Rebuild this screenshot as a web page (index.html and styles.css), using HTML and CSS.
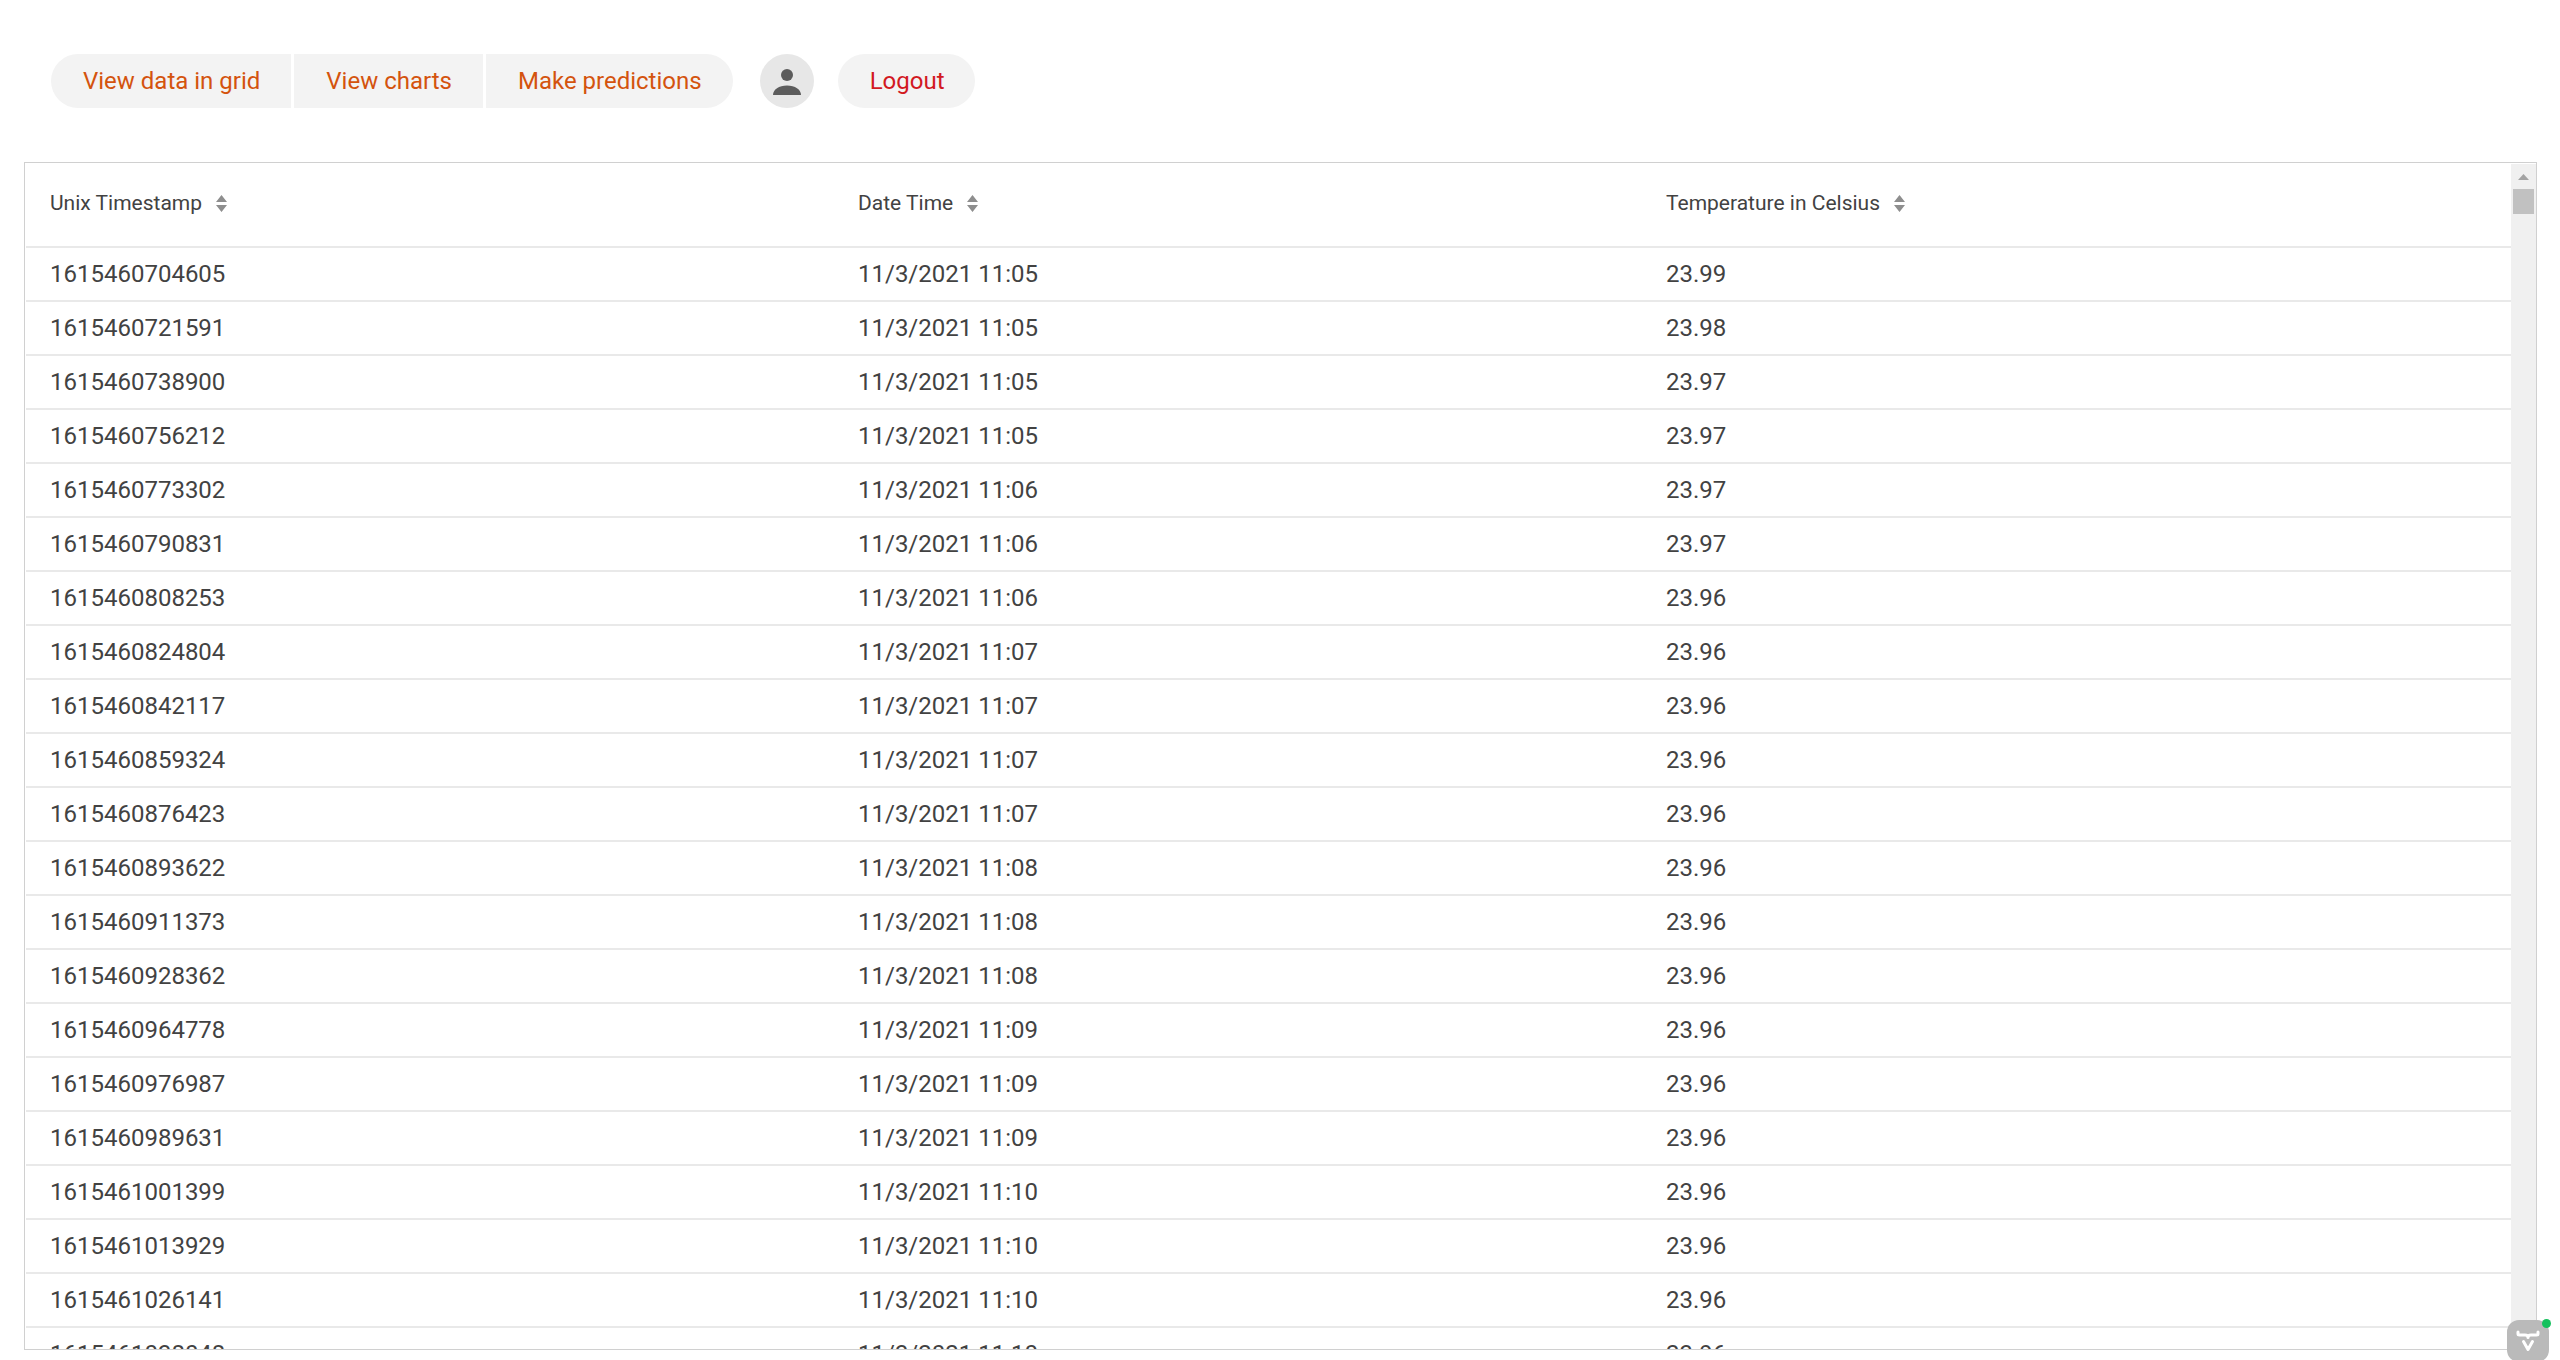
FILE: index.html
```html
<!DOCTYPE html>
<html lang="en">
<head>
<meta charset="utf-8">
<title>Sensor data</title>
<link rel="stylesheet" href="styles.css">
</head>
<body>
<header class="toolbar">
  <nav class="menu">
    <button class="pill" type="button">View data in grid</button>
    <button class="pill" type="button">View charts</button>
    <button class="pill" type="button">Make predictions</button>
  </nav>
  <button class="avatar" type="button" aria-label="Account">
    <svg viewBox="0 0 54 54" aria-hidden="true"><circle cx="27" cy="21" r="6"/><path d="M13 41c0-5.500 6-9.500 14-9.500s14 4 14 9.500z"/></svg>
  </button>
  <button class="pill logout" type="button">Logout</button>
</header>
<main class="grid">
  <div class="viewport">
    <table class="data">
      <colgroup><col class="col"><col class="col"><col></colgroup>
      <thead>
        <tr>
          <th scope="col"><button class="sorter" type="button">Unix Timestamp<svg viewBox="0 0 11 17" aria-hidden="true"><path d="M5.500 0 11 7H0zM0 10h11L5.500 17z"/></svg></button></th>
          <th scope="col"><button class="sorter" type="button">Date Time<svg viewBox="0 0 11 17" aria-hidden="true"><path d="M5.500 0 11 7H0zM0 10h11L5.500 17z"/></svg></button></th>
          <th scope="col"><button class="sorter" type="button">Temperature in Celsius<svg viewBox="0 0 11 17" aria-hidden="true"><path d="M5.500 0 11 7H0zM0 10h11L5.500 17z"/></svg></button></th>
        </tr>
      </thead>
      <tbody>
        <tr><td>1615460704605</td><td>11/3/2021 11:05</td><td>23.99</td></tr>
        <tr><td>1615460721591</td><td>11/3/2021 11:05</td><td>23.98</td></tr>
        <tr><td>1615460738900</td><td>11/3/2021 11:05</td><td>23.97</td></tr>
        <tr><td>1615460756212</td><td>11/3/2021 11:05</td><td>23.97</td></tr>
        <tr><td>1615460773302</td><td>11/3/2021 11:06</td><td>23.97</td></tr>
        <tr><td>1615460790831</td><td>11/3/2021 11:06</td><td>23.97</td></tr>
        <tr><td>1615460808253</td><td>11/3/2021 11:06</td><td>23.96</td></tr>
        <tr><td>1615460824804</td><td>11/3/2021 11:07</td><td>23.96</td></tr>
        <tr><td>1615460842117</td><td>11/3/2021 11:07</td><td>23.96</td></tr>
        <tr><td>1615460859324</td><td>11/3/2021 11:07</td><td>23.96</td></tr>
        <tr><td>1615460876423</td><td>11/3/2021 11:07</td><td>23.96</td></tr>
        <tr><td>1615460893622</td><td>11/3/2021 11:08</td><td>23.96</td></tr>
        <tr><td>1615460911373</td><td>11/3/2021 11:08</td><td>23.96</td></tr>
        <tr><td>1615460928362</td><td>11/3/2021 11:08</td><td>23.96</td></tr>
        <tr><td>1615460964778</td><td>11/3/2021 11:09</td><td>23.96</td></tr>
        <tr><td>1615460976987</td><td>11/3/2021 11:09</td><td>23.96</td></tr>
        <tr><td>1615460989631</td><td>11/3/2021 11:09</td><td>23.96</td></tr>
        <tr><td>1615461001399</td><td>11/3/2021 11:10</td><td>23.96</td></tr>
        <tr><td>1615461013929</td><td>11/3/2021 11:10</td><td>23.96</td></tr>
        <tr><td>1615461026141</td><td>11/3/2021 11:10</td><td>23.96</td></tr>
        <tr><td>1615461038048</td><td>11/3/2021 11:10</td><td>23.96</td></tr>
      </tbody>
    </table>
  </div>
  <div class="scrollbar" aria-hidden="true">
    <svg class="arrow" viewBox="0 0 11 6"><path d="M5.500 0 11 6H0z"/></svg>
    <div class="thumb"></div>
  </div>
</main>
<button class="devtools" type="button" aria-label="Development tools">
  <svg viewBox="0 0 42 42" aria-hidden="true"><path d="M11 12v2q0 1 1.500 1H18q3 0 3 2.500Q21 15 24 15h5.500q1.500 0 1.500-1v-2M16.500 21.500 21 29.500l4.500-8"/></svg>
  <span class="status"></span>
</button>
</body>
</html>
```
FILE: styles.css
```css
* { box-sizing: border-box; }

body {
  margin: 0;
  height: 100vh;
  display: flex;
  flex-direction: column;
  overflow: hidden;
  background: #fff;
  color: #424242;
  font: 24px/32px Roboto, sans-serif;
}

button {
  margin: 0;
  padding: 0;
  border: 0;
  background: none;
  color: inherit;
  font: inherit;
}

.toolbar {
  display: flex;
  align-items: center;
  gap: 24px;
  padding: 54px 51px;
}

.menu {
  display: flex;
  gap: 3px;
  margin-right: 3px;
}

.pill {
  height: 54px;
  padding: 0 31px 0 32px;
  background: #f3f3f3;
  color: #d4530e;
}

.menu .pill:first-child { border-radius: 27px 0 0 27px; }
.menu .pill:last-child { border-radius: 0 27px 27px 0; }

.pill.logout {
  border-radius: 27px;
  color: #d2191f;
}

.avatar {
  width: 54px;
  height: 54px;
  border-radius: 50%;
  background: #e7e7e7;
}

.avatar svg {
  display: block;
  fill: #5c5c5c;
}

.grid {
  flex: 1;
  min-height: 0;
  display: flex;
  margin: 0 23px 10px 24px;
  padding: 1px 0 0 1px;
  border: 1px solid #d0d0d0;
}

.viewport {
  flex: 1;
  overflow: hidden;
}

.data {
  width: 100%;
  table-layout: fixed;
  border-collapse: separate;
  border-spacing: 0;
}

.col { width: 808px; }

th, td {
  height: 54px;
  padding: 0 24px;
  border-bottom: 2px solid #e9e9e9;
  text-align: left;
}

th {
  height: 84px;
  padding-bottom: 4px;
  font-weight: 400;
}

.sorter {
  display: flex;
  align-items: center;
  gap: 14px;
  font-size: 21px;
}

.sorter svg {
  width: 11px;
  height: 17px;
  fill: #8e8e8e;
}

.scrollbar {
  width: 25px;
  padding: 10px 2px 0;
  background: #f0f0f0;
}

.arrow {
  display: block;
  width: 11px;
  height: 6px;
  margin: 0 auto 9px;
  fill: #a3a3a3;
}

.thumb {
  height: 25px;
  background: #c1c1c1;
}

.devtools {
  position: fixed;
  right: 11px;
  bottom: -2px;
  width: 42px;
  height: 42px;
  border-radius: 12px;
  background: #bababa;
}

.devtools svg {
  display: block;
  fill: none;
  stroke: #fff;
  stroke-width: 3;
  stroke-linecap: round;
  stroke-linejoin: round;
}

.status {
  position: absolute;
  top: -1px;
  right: -2px;
  width: 9px;
  height: 9px;
  border-radius: 50%;
  background: #15c15d;
}
```
